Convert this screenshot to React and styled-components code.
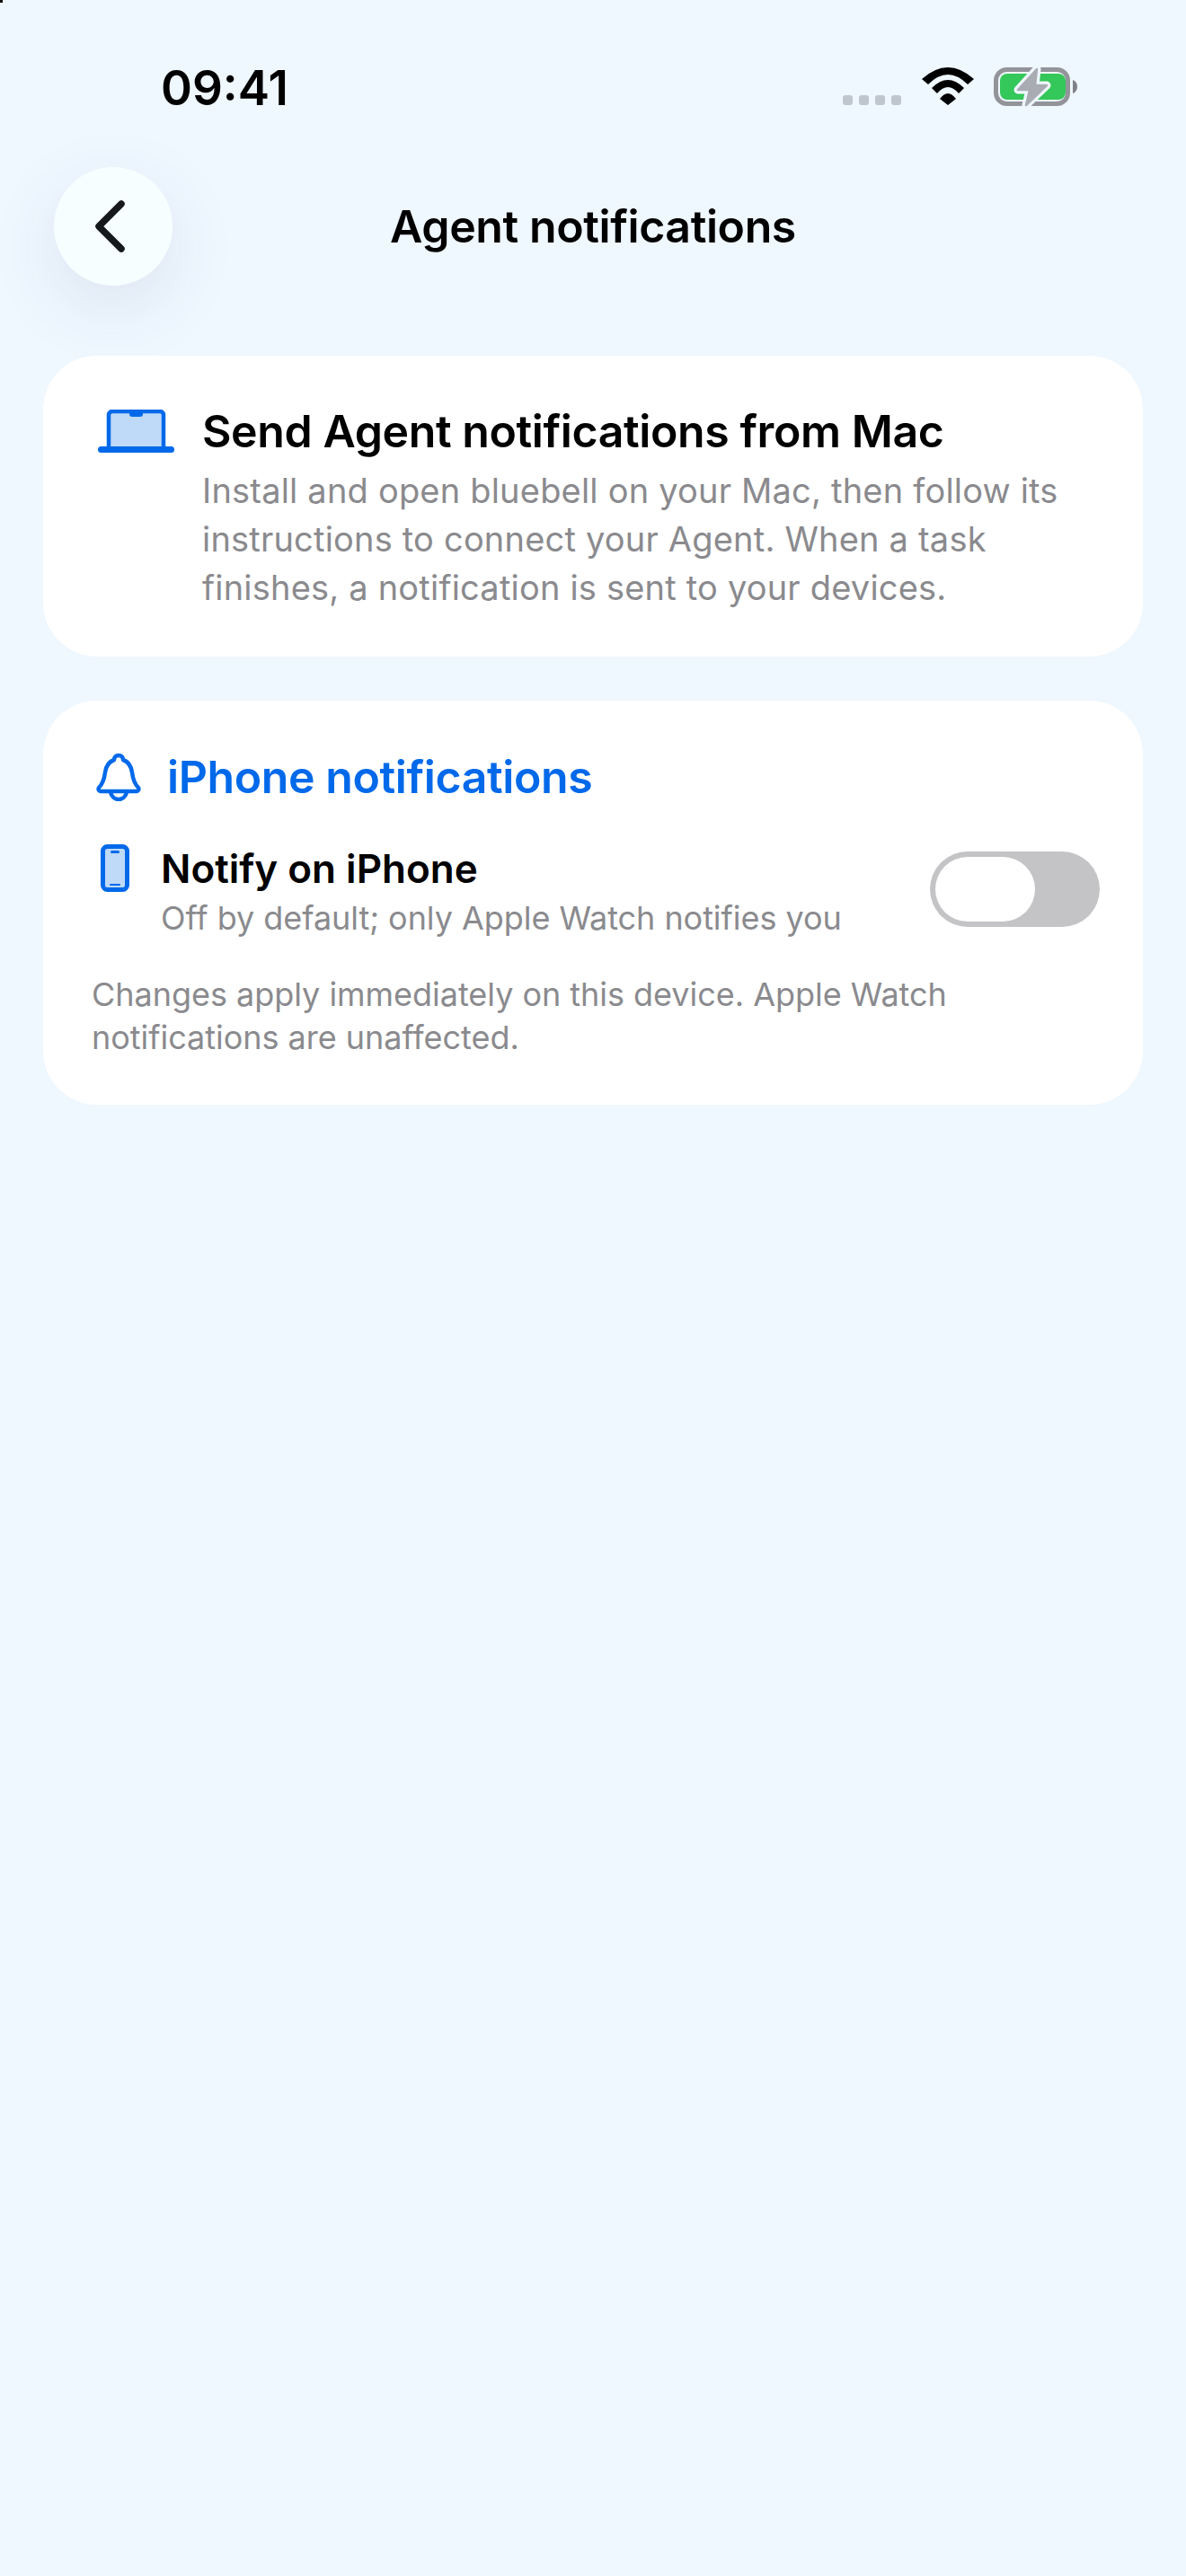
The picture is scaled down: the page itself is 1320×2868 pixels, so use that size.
import React from "react";
import styled, { createGlobalStyle } from "styled-components";

const BLUE = "#0069ea";
const BLUE_TINT = "#bfd9f9";
const GRAY = "#8a8a8e";
const PAGE_BG = "#eff7ff";

const GlobalStyle = createGlobalStyle`
  html, body {
    margin: 0;
    padding: 0;
    background: ${PAGE_BG};
  }
  * {
    box-sizing: border-box;
  }
`;

const Page = styled.div`
  width: 1320px;
  height: 2868px;
  position: relative;
  overflow: hidden;
  background: ${PAGE_BG};
  font-family: Inter, "Liberation Sans", sans-serif;
  color: #000;
`;

const CornerMark = styled.div`
  position: absolute;
  top: 0;
  left: 0;
  width: 3px;
  height: 3px;
  background: #111;
`;

const StatusBar = styled.div`
  height: 186px;
  padding: 68px 120px 0 179px;
  display: flex;
  justify-content: space-between;
  align-items: flex-start;
`;

const Clock = styled.div`
  font-size: 53px;
  line-height: 60px;
  font-weight: 560;
`;

const StatusIcons = styled.div`
  display: flex;
  align-items: flex-start;
  margin-top: 7px;
`;

const SignalDots = styled.div`
  display: flex;
  gap: 7px;
  margin: 31px 23px 0 0;
`;

const SignalDot = styled.span`
  width: 11px;
  height: 11px;
  border-radius: 3px;
  background: #c0c6ce;
`;

const WifiIcon = styled.svg`
  width: 58px;
  height: 42px;
  margin-right: 22px;
`;

const BatteryIcon = styled.svg`
  width: 94px;
  height: 44px;
  overflow: visible;
`;

const NavBar = styled.div`
  height: 132px;
  margin: 0 60px;
  display: grid;
  grid-template-columns: 132px 1fr 132px;
  align-items: center;
`;

const BackButton = styled.button`
  width: 132px;
  height: 132px;
  padding: 0 8px 0 0;
  border: 0;
  border-radius: 50%;
  background: #f6feff;
  box-shadow: 0 24px 80px rgba(60, 80, 110, 0.1);
  display: flex;
  align-items: center;
  justify-content: center;
`;

const NavTitle = styled.h1`
  margin: 0;
  text-align: center;
  font-size: 50px;
  line-height: 60px;
  font-weight: 560;
  letter-spacing: -0.4px;
`;

const Content = styled.div`
  margin: 78px 48px 0;
  display: flex;
  flex-direction: column;
  gap: 49px;
`;

const Card = styled.section`
  background: #fff;
  border-radius: 60px;
  padding: ${(props) => props.padding};
`;

const MacRow = styled.div`
  display: flex;
  align-items: flex-start;
`;

const MacIcon = styled.svg`
  width: 86px;
  height: 48px;
  margin: 6px 30px 0 0;
  flex: none;
`;

const CardTitle = styled.h2`
  margin: 0;
  font-size: 50px;
  line-height: 60px;
  font-weight: 560;
  letter-spacing: -0.4px;
  color: ${(props) => props.color || "#000"};
`;

const BodyText = styled.p`
  margin: 9px 0 0;
  font-size: 38px;
  line-height: 54px;
  font-weight: 400;
  letter-spacing: 0.2px;
  color: ${GRAY};
`;

const SectionHeader = styled.div`
  display: flex;
  align-items: center;
  gap: 29px;
  margin-left: 5px;
`;

const BellIcon = styled.svg`
  width: 50px;
  height: 54px;
  flex: none;
`;

const SettingRow = styled.div`
  display: flex;
  align-items: center;
  margin-top: 45px;
`;

const PhoneIcon = styled.svg`
  width: 32px;
  height: 53px;
  margin: 0 35px 0 10px;
  align-self: flex-start;
  flex: none;
`;

const SettingText = styled.div`
  flex: 1;
`;

const SettingTitle = styled.div`
  font-size: 44px;
  line-height: 54px;
  font-weight: 560;
`;

const SettingHint = styled.div`
  margin-top: 5px;
  font-size: 36px;
  line-height: 46px;
  letter-spacing: -0.05px;
  color: ${GRAY};
`;

const Toggle = styled.div`
  width: 189px;
  height: 84px;
  margin-bottom: 5px;
  padding: 6px;
  border-radius: 42px;
  background: #c4c4c6;
`;

const ToggleThumb = styled.div`
  width: 111px;
  height: 72px;
  border-radius: 36px;
  background: #fff;
`;

const FootNote = styled.p`
  margin: 38px 0 0;
  font-size: 36px;
  line-height: 48px;
  letter-spacing: -0.03px;
  color: ${GRAY};
`;

const ChevronLeft = () => (
  <svg width="34" height="58" viewBox="0 0 34 58" fill="none">
    <path
      d="M30 4 L5 29 L30 54"
      stroke="#15191c"
      strokeWidth="7.5"
      strokeLinecap="round"
      strokeLinejoin="round"
    />
  </svg>
);

const BOLT = "M48 2 L27 25 H40 L36 42 L59 20 H46 Z";

const App = () => (
  <Page>
    <GlobalStyle />
    <CornerMark />
    <StatusBar>
      <Clock>09:41</Clock>
      <StatusIcons>
        <SignalDots>
          <SignalDot />
          <SignalDot />
          <SignalDot />
          <SignalDot />
        </SignalDots>
        <WifiIcon viewBox="0 0 58 42">
          <path
            d="M0 13 Q29 -13 58 13 L51 19 Q29 -3 7 19 Z M11 23 Q29 5 47 23 L41 29 Q29 15 17 29 Z M20 35 Q29 23 38 35 L29 42 Z"
            fill="#000"
          />
        </WifiIcon>
        <BatteryIcon viewBox="0 0 94 44">
          <rect x="2.5" y="2.5" width="80" height="38" rx="12" fill="none" stroke="#92949a" strokeWidth="5" />
          <rect x="7" y="7" width="73" height="29" rx="8" fill="#34c759" />
          <path d="M88 14 C91 15 93 18 93 21.5 C93 25 91 28 88 29 Z" fill="#7f8187" />
          <path d={BOLT} fill={PAGE_BG} stroke={PAGE_BG} strokeWidth="9" strokeLinejoin="round" />
          <path d={BOLT} fill="#a9acb3" stroke="#a9acb3" strokeWidth="2.5" strokeLinejoin="round" />
        </BatteryIcon>
      </StatusIcons>
    </StatusBar>

    <NavBar>
      <BackButton>
        <ChevronLeft />
      </BackButton>
      <NavTitle>Agent notifications</NavTitle>
      <span />
    </NavBar>

    <Content>
      <Card padding="54px 48px 50px 61px">
        <MacRow>
          <MacIcon viewBox="0 0 86 48">
            <path d="M14 2 H72 V42 H14 Z" fill={BLUE_TINT} />
            <path
              d="M12 42 V6 A4 4 0 0 1 16 2 H69 A4 4 0 0 1 73 6 V42"
              fill="none"
              stroke={BLUE}
              strokeWidth="4.5"
            />
            <path d="M35 2 H50 V5 A3 3 0 0 1 47 8 H38 A3 3 0 0 1 35 5 Z" fill={BLUE} />
            <rect x="0" y="41" width="85" height="7" rx="3.5" fill={BLUE} />
          </MacIcon>
          <div>
            <CardTitle>Send Agent notifications from Mac</CardTitle>
            <BodyText>
              Install and open bluebell on your Mac, then follow its
              <br />
              instructions to connect your Agent. When a task
              <br />
              finishes, a notification is sent to your devices.
            </BodyText>
          </div>
        </MacRow>
      </Card>

      <Card padding="55px 48px 51px 54px">
        <SectionHeader>
          <BellIcon viewBox="0 0 50 54">
            <path
              d="M25 3 C28 3 30 5 30 8 C36 10 39 15 40 22 C41 30 43 35 47 39 C48 41 47 43 45 43 H5 C3 43 2 41 3 39 C7 35 9 30 10 22 C11 15 14 10 20 8 C20 5 22 3 25 3 Z"
              fill="none"
              stroke={BLUE}
              strokeWidth="4.5"
              strokeLinejoin="round"
            />
            <path d="M16 44 C17 49 21 52 25 52 C29 52 33 49 34 44" fill="none" stroke={BLUE} strokeWidth="4.5" />
          </BellIcon>
          <CardTitle color={BLUE}>iPhone notifications</CardTitle>
        </SectionHeader>
        <SettingRow>
          <PhoneIcon viewBox="0 0 32 53">
            <rect x="2.5" y="2.5" width="27" height="48" rx="5" fill={BLUE_TINT} stroke={BLUE} strokeWidth="5" />
            <rect x="11" y="7" width="10" height="3" rx="1.5" fill={BLUE} />
            <rect x="10" y="44" width="12" height="2" rx="1" fill={BLUE} />
          </PhoneIcon>
          <SettingText>
            <SettingTitle>Notify on iPhone</SettingTitle>
            <SettingHint>Off by default; only Apple Watch notifies you</SettingHint>
          </SettingText>
          <Toggle>
            <ToggleThumb />
          </Toggle>
        </SettingRow>
        <FootNote>
          Changes apply immediately on this device. Apple Watch
          <br />
          notifications are unaffected.
        </FootNote>
      </Card>
    </Content>
  </Page>
);

export default App;
